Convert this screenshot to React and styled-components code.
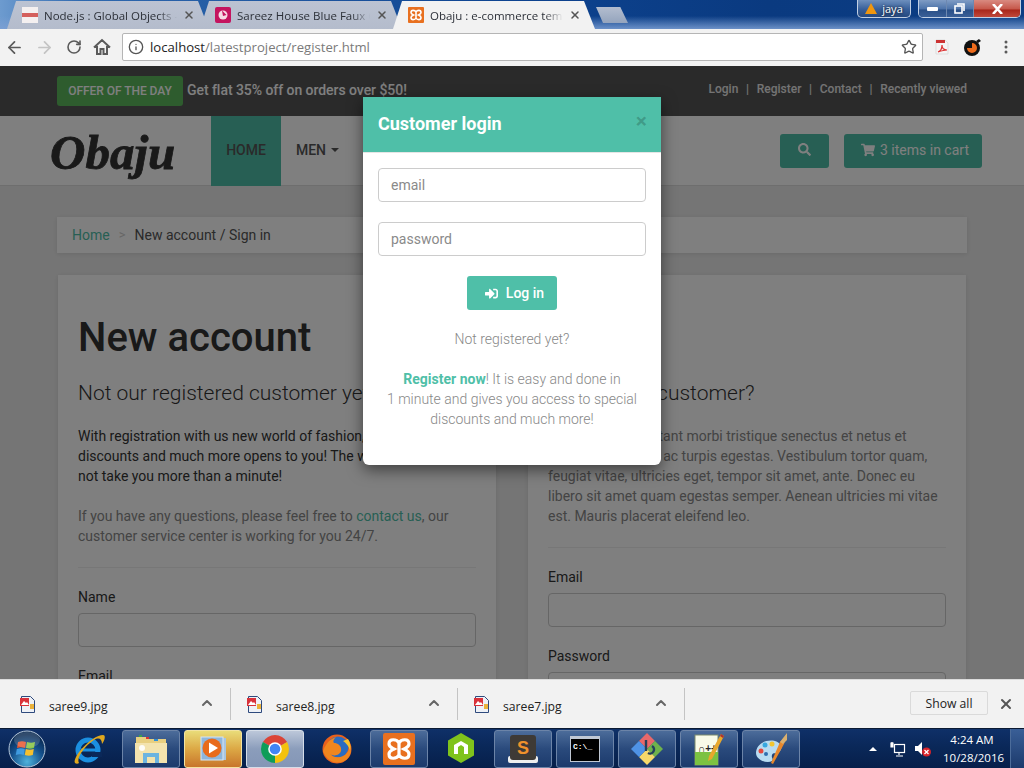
import React from 'react';
import styled, { createGlobalStyle } from 'styled-components';
import { ArrowLeft, ArrowRight, RotateCw, Info, Star, X, ChevronUp } from 'lucide-react';
import { FaSearch, FaShoppingCart, FaSignInAlt } from 'react-icons/fa';

const GlobalStyle = createGlobalStyle`
  html, body {
    margin: 0;
    padding: 0;
    width: 1024px;
    height: 768px;
    overflow: hidden;
    font-family: Roboto, "Liberation Sans", sans-serif;
  }
  * { box-sizing: border-box; }
`;

const Screen = styled.div`
  width: 1024px;
  height: 768px;
  display: flex;
  flex-direction: column;
  overflow: hidden;
`;

/* ---------- window title bar and tabs ---------- */

const TitleBar = styled.div`
  height: 29px;
  flex: none;
  display: flex;
  align-items: flex-start;
  padding-left: 7px;
  background:
    linear-gradient(180deg, rgba(10, 50, 120, 0) 55%, rgba(125, 160, 212, 0.85) 100%),
    linear-gradient(90deg, #6d9bcf 0%, #2e68ae 8%, #0d4390 50%, #0a3a80 75%, #0b3d84 100%);
`;

const Tab = styled.div`
  width: 202px;
  height: 28px;
  margin-top: 1px;
  margin-right: -9px;
  flex: none;
  padding: 0 14px 0 15px;
  display: flex;
  align-items: center;
  gap: 6px;
  font-family: "Open Sans", sans-serif;
  font-size: 11.5px;
  color: #2c3038;
  clip-path: polygon(0 100%, 9px 0, calc(100% - 11px) 0, 100% 100%);
  background: ${(p) => (p.$active ? '#f2f2f2' : 'linear-gradient(180deg, #bcc3d2, #b4bccc)')};
  position: relative;
  z-index: ${(p) => (p.$active ? 2 : 1)};
`;

const TabTitle = styled.span`
  flex: 1;
  overflow: hidden;
  white-space: nowrap;
  -webkit-mask-image: linear-gradient(90deg, #000 86%, transparent 100%);
  mask-image: linear-gradient(90deg, #000 86%, transparent 100%);
`;

const TabClose = styled(X)`
  flex: none;
  width: 12px;
  height: 12px;
  color: #555;
  stroke-width: 3;
`;

const NewTab = styled.div`
  width: 32px;
  height: 16px;
  margin: 7px 0 0 10px;
  flex: none;
  background: linear-gradient(180deg, #b3bdcf, #94a4bd);
  clip-path: polygon(0 0, 76% 0, 100% 100%, 22% 100%);
`;

const WindowControls = styled.div`
  margin-left: auto;
  display: flex;
  align-items: flex-start;
  gap: 7px;
  padding-right: 3px;
`;

const UserBadge = styled.div`
  width: 54px;
  height: 18px;
  border: 1px solid #c2d0e4;
  border-top: none;
  border-radius: 0 0 5px 5px;
  background: linear-gradient(180deg, #6d8fbd 0%, #375f9a 55%, #26497f 100%);
  display: flex;
  align-items: center;
  justify-content: center;
  gap: 5px;
  color: #fff;
  font-family: "Open Sans", sans-serif;
  font-size: 11px;
  text-shadow: 0 0 3px #000;
`;

const ControlGroup = styled.div`
  width: 103px;
  height: 18px;
  border: 1px solid #c2d0e4;
  border-top: none;
  border-radius: 0 0 5px 5px;
  display: flex;
  overflow: hidden;
`;

const ControlButton = styled.div`
  flex: ${(p) => (p.$close ? '0 0 47px' : '1')};
  display: flex;
  align-items: center;
  justify-content: center;
  border-left: ${(p) => (p.$first ? 'none' : '1px solid #6d88b0')};
  background: ${(p) =>
    p.$close
      ? 'linear-gradient(180deg, #d98a80 0%, #c75a4d 50%, #a9281c 60%, #c0483b 100%)'
      : 'linear-gradient(180deg, #7f9cc4 0%, #4f75ab 50%, #2a5088 60%, #3a5f97 100%)'};
`;

/* ---------- browser toolbar ---------- */

const Toolbar = styled.div`
  height: 37px;
  flex: none;
  display: flex;
  align-items: center;
  background: #f2f2f2;
  padding-bottom: 1px;
`;

const NavButton = styled.div`
  width: ${(p) => p.$w || 28}px;
  margin-right: ${(p) => p.$gap ?? 2}px;
  flex: none;
  display: flex;
  justify-content: center;
  align-items: center;
  color: ${(p) => (p.$off ? '#c4c4c4' : '#5a5a5a')};
`;

const AddressBar = styled.div`
  width: 801px;
  height: 28px;
  margin-left: 8px;
  flex: none;
  background: #fff;
  border: 1px solid #b5b5b5;
  border-radius: 2px;
  display: flex;
  align-items: center;
  padding: 0 5px 0 5px;
  font-family: "Open Sans", sans-serif;
  font-size: 13.15px;
  color: #7a7a7a;
  b {
    font-weight: 400;
    color: #222;
  }
`;

const UrlText = styled.span`
  margin-left: 6px;
  flex: 1;
`;

/* ---------- page behind the dialog ---------- */

const Viewport = styled.div`
  height: 613px;
  flex: none;
  position: relative;
  overflow: hidden;
  background: #ebebeb;
  font-size: 14px;
  color: #555;
`;

const TopBar = styled.div`
  height: 50px;
  background: #555;
  padding: 0 57px;
  display: flex;
  align-items: center;
  justify-content: space-between;
  color: #fff;
`;

const Offer = styled.div`
  display: flex;
  align-items: center;
  gap: 4px;
  font-weight: 500;
  margin-top: -1px;
  letter-spacing: -0.05px;
`;

const OfferBadge = styled.span`
  width: 126px;
  height: 30px;
  background: #5cb85c;
  border-radius: 3px;
  display: flex;
  align-items: center;
  justify-content: center;
  font-size: 12px;
  font-weight: 500;
`;

const OfferText = styled.span`
  margin-top: -2px;
`;

const TopLinks = styled.div`
  display: flex;
  gap: 7.7px;
  font-size: 12px;
  font-weight: 500;
  color: #e8e8e8;
  margin-top: -5px;
`;

const Navbar = styled.div`
  height: 70px;
  background: #fff;
  border-bottom: 1px solid #ddd;
  display: flex;
  align-items: stretch;
  padding: 0 42px 0 50px;
`;

const Logo = styled.div`
  width: 161px;
  flex: none;
  font-family: "Liberation Serif", serif;
  font-style: italic;
  font-weight: 700;
  font-size: 49px;
  line-height: 74px;
  color: #333;
  -webkit-text-stroke: 0.8px #333;
`;

const NavItem = styled.div`
  width: ${(p) => p.$w}px;
  display: flex;
  align-items: center;
  justify-content: center;
  gap: 5px;
  padding-bottom: 2px;
  font-weight: 500;
  color: #555;
  margin-bottom: ${(p) => (p.$active ? '-1px' : '0')};
  background: ${(p) => (p.$active ? '#4fbfa8' : 'transparent')};
`;

const Caret = styled.span`
  width: 0;
  height: 0;
  border-left: 4px solid transparent;
  border-right: 4px solid transparent;
  border-top: 4px solid #555;
`;

const TealButton = styled.div`
  height: 34px;
  width: ${(p) => p.$w}px;
  padding-left: ${(p) => p.$pad || 0}px;
  background: #4fbfa8;
  border-radius: 3px;
  display: flex;
  align-items: center;
  justify-content: center;
  gap: ${(p) => p.$gap || 5}px;
  color: #fff;
  font-weight: ${(p) => p.$weight || 400};
`;

const NavActions = styled.div`
  margin-left: auto;
  display: flex;
  align-items: center;
  gap: 15px;
  color: #fff;
  ${TealButton} {
    padding-bottom: 2px;
  }
`;

const Content = styled.div`
  padding: 31px 57px 0;
`;

const Breadcrumb = styled.div`
  height: 36px;
  background: #fff;
  box-shadow: 0 1px 5px rgba(0, 0, 0, 0.1);
  padding: 0 15px 1px;
  display: flex;
  align-items: center;
  gap: 9px;
`;

const Teal = styled.span`
  color: #4fbfa8;
`;

const Sep = styled.span`
  color: #ccc;
  font-size: 13px;
`;

const Columns = styled.div`
  margin: 22px 1px 0;
  display: grid;
  grid-template-columns: 438px 438px;
  gap: 32px;
`;

const Box = styled.div`
  background: #fff;
  box-shadow: 0 1px 5px rgba(0, 0, 0, 0.1);
  padding: 43px 20px 0;
  height: 500px;
`;

const Title = styled.h1`
  margin: 0;
  font-size: 40px;
  line-height: 40px;
  font-weight: 500;
  color: #333;
`;

const Subtitle = styled.h2`
  margin: 23px 0 21px;
  font-size: 21px;
  line-height: 24px;
  font-weight: 300;
  color: #333;
  white-space: nowrap;
`;

const Para = styled.p`
  margin: 0 0 20px;
  line-height: 20px;
  color: ${(p) => (p.$muted ? '#888' : '#333')};
  white-space: nowrap;
`;

const Rule = styled.hr`
  margin: 21px 0 19px;
  border: none;
  border-top: 1px solid #eee;
`;

const Label = styled.div`
  line-height: 20px;
  margin-bottom: 6px;
  color: #333;
`;

const PageInput = styled.div`
  height: 34px;
  border: 1px solid #ccc;
  border-radius: 4px;
  margin-bottom: 19px;
`;

/* ---------- login dialog ---------- */

const Backdrop = styled.div`
  position: absolute;
  inset: 0;
  background: rgba(0, 0, 0, 0.5);
  display: flex;
  justify-content: center;
  align-items: flex-start;
  padding-top: 31px;
`;

const Modal = styled.div`
  width: 298px;
  height: 368px;
  background: #fff;
  border-radius: 0 0 6px 6px;
  box-shadow: 0 5px 15px rgba(0, 0, 0, 0.5);
  overflow: hidden;
`;

const ModalHeader = styled.div`
  height: 56px;
  background: #4fbfa8;
  padding: 0 15px 2px;
  display: flex;
  align-items: center;
  justify-content: space-between;
  color: #fff;
  font-size: 18px;
  font-weight: 700;
  border-bottom: 1px solid #e5e5e5;
`;

const ModalClose = styled.span`
  font-size: 21px;
  font-weight: 700;
  color: rgba(0, 0, 0, 0.2);
  line-height: 1;
  margin: -4px -1px 0 0;
`;

const ModalBody = styled.div`
  padding: 15px 15px 0;
  display: flex;
  flex-direction: column;
  align-items: stretch;
`;

const Field = styled.div`
  height: 34px;
  border: 1px solid #ccc;
  border-radius: 4px;
  padding: 0 12px;
  margin-bottom: 20px;
  display: flex;
  align-items: center;
  color: #8a8a8a;
  font-size: 14px;
  font-weight: 400;
`;

const ModalAction = styled.div`
  display: flex;
  justify-content: center;
`;

const ModalNote = styled.div`
  text-align: center;
  line-height: 20px;
  color: #888;
  font-weight: 300;
  margin-top: ${(p) => p.$top}px;
  b {
    font-weight: 700;
    color: #4fbfa8;
  }
`;

/* ---------- downloads shelf ---------- */

const Downloads = styled.div`
  height: 49px;
  flex: none;
  background: #f2f2f2;
  border-top: 1px solid #dcdcdc;
  display: flex;
  align-items: center;
  font-family: "Open Sans", sans-serif;
  font-size: 12.2px;
  color: #222;
`;

const DownloadItem = styled.div`
  width: ${(p) => (p.$first ? 231 : 227)}px;
  height: 32px;
  flex: none;
  padding: 0 15px 0 ${(p) => (p.$first ? 20 : 16)}px;
  border-right: 1px solid #c4c4c4;
  display: flex;
  align-items: center;
  gap: 12px;
`;

const FileName = styled.span`
  flex: 1;
  margin-top: 4px;
`;

const ShowAll = styled.div`
  margin-left: auto;
  width: 78px;
  height: 24px;
  border: 1px solid #dadada;
  border-radius: 2px;
  display: flex;
  align-items: center;
  justify-content: center;
  margin-top: -2px;
`;

const ShelfClose = styled(X)`
  width: 16px;
  height: 16px;
  margin: 0 10px 0 10px;
  color: #555;
  stroke-width: 3;
`;

const ShelfChevron = styled(ChevronUp)`
  width: 16px;
  height: 16px;
  color: #666;
  stroke-width: 3;
  margin-top: -2px;
`;

/* ---------- windows taskbar ---------- */

const Taskbar = styled.div`
  height: 40px;
  flex: none;
  display: flex;
  align-items: center;
  border-top: 1px solid #0b1a33;
  background: linear-gradient(180deg, #0f3068 0%, #0a2859 45%, #071f4a 100%);
`;

const StartSlot = styled.div`
  width: 60px;
  flex: none;
  padding-left: 8px;
  display: flex;
  align-items: center;
`;

const TaskSlots = styled.div`
  display: flex;
  gap: 4px;
  align-items: center;
`;

const TaskButton = styled.div`
  width: 58px;
  height: 38px;
  flex: none;
  display: flex;
  align-items: center;
  justify-content: center;
  border-radius: 3px;
  ${(p) => p.$kind === 'box' && `
    border: 1px solid #6c84a8;
    background: linear-gradient(180deg, #4c6c9a 0%, #2a4a7c 50%, #1c3a6c 100%);
  `}
  ${(p) => p.$kind === 'active' && `
    border: 1px solid #d5dde8;
    background: linear-gradient(180deg, #bcc7d9 0%, #8b9dbb 50%, #8496b6 100%);
  `}
  ${(p) => p.$kind === 'hot' && `
    border: 1px solid #f3e3a0;
    background: linear-gradient(180deg, #e9dc79 0%, #dca845 50%, #c8752b 100%);
  `}
`;

const Tray = styled.div`
  margin-left: auto;
  display: flex;
  align-items: center;
  height: 100%;
  color: #fff;
`;

const TrayCaret = styled.span`
  width: 0;
  height: 0;
  border-left: 4px solid transparent;
  border-right: 4px solid transparent;
  border-bottom: 4px solid #fff;
  margin-right: 13px;
`;

const TrayIcon = styled.span`
  display: flex;
  margin-right: ${(p) => p.$gap}px;
`;

const Clock = styled.div`
  width: 58px;
  padding-top: 1px;
  text-align: center;
  font-family: "Open Sans", sans-serif;
  font-size: 11.5px;
  line-height: 18px;
  white-space: nowrap;
`;

const ShowDesktop = styled.div`
  width: 14px;
  height: 100%;
  margin-left: 9px;
  border-left: 1px solid #4c6c9a;
  background: linear-gradient(180deg, #3a5f97, #1c3a6c);
`;

/* ---------- drawn icons ---------- */

const HomeIcon = () => (
  <svg width="18" height="18" viewBox="0 0 18 18" fill="none" stroke="#5a5a5a" strokeWidth="2">
    <path d="M1 9.5 9 2l8 7.5M4 8v8h3.5v-5h3v5H14V8" />
  </svg>
);

const XamppIcon = ({ size = 16 }) => (
  <svg width={size} height={size} viewBox="0 0 32 32">
    <rect width="32" height="32" rx="2" fill="#e8701f" />
    <path
      d="M16 10C14 6 6 5 6 11C6 14 9 15 11 16C9 17 6 18 6 21C6 27 14 26 16 22C18 26 26 27 26 21C26 18 23 17 21 16C23 15 26 14 26 11C26 5 18 6 16 10ZM16 10V22"
      fill="none"
      stroke="#fff"
      strokeWidth="3.2"
    />
  </svg>
);

const NodeFavicon = () => (
  <svg width="16" height="16" viewBox="0 0 16 16">
    <rect width="16" height="16" fill="#f4f0f0" />
    <rect y="6" width="16" height="4" fill="#c9302c" opacity="0.75" />
  </svg>
);

const SareeFavicon = () => (
  <svg width="16" height="16" viewBox="0 0 16 16">
    <rect width="16" height="16" rx="2" fill="#c4145f" />
    <circle cx="8" cy="8" r="4.500" fill="#f6dbe6" />
    <path d="M7 3.500l4.500 4.500-3.500 1z" fill="#c4145f" />
  </svg>
);

const WarnIcon = () => (
  <svg width="12" height="11" viewBox="0 0 12 11">
    <path d="M6 0l6 11H0z" fill="#f0960e" />
  </svg>
);

const PdfIcon = () => (
  <svg width="14" height="16" viewBox="0 0 14 16">
    <path d="M1 1h9l3 3v11H1z" fill="#f4f4f4" stroke="#ddd" />
    <rect x="1" y="1" width="9" height="3" fill="#c33" />
    <path d="M3 13c3-1 4-4 4-7 0 3 2 5 5 5-3 0-6 1-9 2z" fill="none" stroke="#d33" strokeWidth="1.200" />
  </svg>
);

const BombIcon = () => (
  <svg width="18" height="18" viewBox="0 0 18 18">
    <circle cx="8" cy="10" r="8" fill="#111" />
    <path d="M8 10V5a5 5 0 1 1-5 5z" fill="#ee6b1c" />
    <path d="M12 3l3-2 2 2-3 2z" fill="#111" />
  </svg>
);

const MenuDots = () => (
  <svg width="4" height="14" viewBox="0 0 4 14" fill="#5a5a5a">
    <circle cx="2" cy="2" r="1.500" />
    <circle cx="2" cy="7" r="1.500" />
    <circle cx="2" cy="12" r="1.500" />
  </svg>
);

const ImageFileIcon = () => (
  <svg width="17" height="17" viewBox="0 0 17 17">
    <path d="M1.500 .5h9l4 4v12h-13z" fill="#eef1f6" stroke="#2e4a7d" />
    <rect x="0" y="2" width="9" height="8" fill="#d9323a" />
    <path d="M1 9l3-4 2 2 1-1 2 3z" fill="#fff" />
    <rect x="10" y="8" width="4" height="5" fill="#eab23c" />
  </svg>
);

const WinOrb = () => (
  <svg width="38" height="38" viewBox="0 0 38 38">
    <defs>
      <radialGradient id="orb" cx="50%" cy="85%" r="75%">
        <stop offset="0" stopColor="#4fb2dc" />
        <stop offset="0.6" stopColor="#14508c" />
        <stop offset="1" stopColor="#0a2a52" />
      </radialGradient>
    </defs>
    <circle cx="19" cy="19" r="18" fill="url(#orb)" stroke="#b7c8da" strokeWidth="1" />
    <path d="M10 12c3-1 5-1 8 0l-1 6c-3-1-5-1-8 0z" fill="#e8552d" />
    <path d="M19 12c3 1 5 1 8 0l-1 6c-3 1-5 1-8 0z" fill="#84c33f" />
    <path d="M8.800 19c3-1 5-1 8 0l-1 6c-3-1-5-1-8 0z" fill="#3f9be0" />
    <path d="M17.800 19c3 1 5 1 8 0l-1 6c-3 1-5 1-8 0z" fill="#f5c02e" />
    <ellipse cx="19" cy="10" rx="13" ry="8" fill="#fff" opacity="0.16" />
  </svg>
);

const IeIcon = () => (
  <svg width="34" height="34" viewBox="0 0 34 34">
    <circle cx="16" cy="18" r="10" fill="none" stroke="#1b8fe0" strokeWidth="5" />
    <rect x="9" y="16.500" width="15" height="3" fill="#1b8fe0" />
    <rect x="20" y="20" width="10" height="5" fill="#0a2859" />
    <path d="M3 31C0 25 20 3 31 3c3 0 2 5-1 9C30 7 27 5 22 8 14 13 4 25 7 31c-1 1-3 1-4 0z" fill="#e0a81e" />
  </svg>
);

const FolderIcon = () => (
  <svg width="34" height="30" viewBox="0 0 34 30">
    <path d="M2 3h10l2 2h18v6H2z" fill="#e8cf80" />
    <rect x="5" y="1" width="3" height="2" fill="#3aa04c" />
    <rect x="12" y="3" width="3" height="2" fill="#d33" />
    <rect x="20" y="5" width="4" height="2" fill="#2e8fd8" />
    <path d="M1 9h32v20H1z" fill="#f3e3ae" />
    <path d="M9 29V19h16v10h-4v-6h-8v6z" fill="#6cb4e0" />
    <circle cx="8" cy="14" r="3" fill="#fff" opacity="0.9" />
  </svg>
);

const WmpIcon = () => (
  <svg width="30" height="28" viewBox="0 0 30 28">
    <rect x="6" y="3" width="22" height="22" fill="#a9c5e0" />
    <rect x="3" y="2" width="22" height="23" fill="#8fb6dc" stroke="#d6e6f5" />
    <circle cx="14" cy="13" r="9.500" fill="#e86b1c" />
    <path d="M11 7.500 20 13l-9 5.500z" fill="#fff" />
  </svg>
);

const ChromeIcon = () => (
  <svg width="30" height="30" viewBox="0 0 30 30">
    <path d="M15 15 2.900 8A14 14 0 0 1 27.100 8z" fill="#db4437" />
    <path d="M15 15 27.100 8A14 14 0 0 1 15 29z" fill="#f4c20d" />
    <path d="M15 15V29A14 14 0 0 1 2.900 8z" fill="#0f9d58" />
    <circle cx="15" cy="15" r="6.800" fill="#fff" />
    <circle cx="15" cy="15" r="5.300" fill="#4285f4" />
  </svg>
);

const FirefoxIcon = () => (
  <svg width="32" height="32" viewBox="0 0 32 32">
    <circle cx="16" cy="16" r="14.500" fill="#e8601c" />
    <circle cx="17" cy="14" r="10.500" fill="#2b6cc0" />
    <path d="M2 18C6 8 10 6 15 4c-3 3-3 5-2 6 4 0 8 3 7 8-1 4-7 6-11 3 3 4 12 5 17-1 3-4 3-9 1-13 4 6 4 13 0 18-6 7-20 7-25-7z" fill="#f0861e" />
    <path d="M27 6c2 3 3 7 2 11-2-5-4-7-7-9z" fill="#f8c32c" />
  </svg>
);

const NodeIcon = () => (
  <svg width="30" height="34" viewBox="0 0 30 34">
    <path d="M15 1 28 8.500v15L15 31 2 23.500v-15z" fill="#7fc31c" />
    <path d="M8 22V13l7-4 7 4v9h-4v-7l-3-2-3 2v7z" fill="#fff" />
  </svg>
);

const SublimeIcon = () => (
  <svg width="32" height="32" viewBox="0 0 32 32">
    <rect x="1" y="23" width="30" height="7" rx="2" fill="#eee" />
    <rect x="3" y="2" width="26" height="25" rx="3" fill="#3e3a36" />
    <text x="16" y="21" textAnchor="middle" fontFamily="Liberation Sans, sans-serif" fontSize="18" fontWeight="700" fill="#f0912c">S</text>
  </svg>
);

const CmdIcon = () => (
  <svg width="30" height="26" viewBox="0 0 30 26">
    <rect width="30" height="26" fill="#c0c8d4" />
    <rect x="1" y="3" width="28" height="22" fill="#000" />
    <text x="3" y="13" fontFamily="Liberation Mono, monospace" fontSize="8" fontWeight="700" fill="#fff">C:\_</text>
  </svg>
);

const GitIcon = () => (
  <svg width="34" height="34" viewBox="0 0 34 34">
    <path d="M17 1l8 8-8 8-8-8z" fill="#e8686a" />
    <path d="M25 9l8 8-8 8-8-8z" fill="#6fb24c" />
    <path d="M17 17l8 8-8 8-8-8z" fill="#f6d96a" />
    <path d="M9 9l8 8-8 8-8-8z" fill="#4f93e6" />
    <path d="M16 8v11M22 14a4 4 0 1 1-4 7" fill="none" stroke="#24405c" strokeWidth="2.400" />
  </svg>
);

const NotepadIcon = () => (
  <svg width="32" height="34" viewBox="0 0 32 34">
    <rect x="2" y="3" width="23" height="30" fill="#f8fbe8" stroke="#7c8c6c" />
    <path d="M2 20h23v13H2z" fill="#7cc242" />
    <text x="5" y="20" fontFamily="Liberation Sans, sans-serif" fontSize="10" fontWeight="700" fill="#222">∩++</text>
    <path d="M28 2 31 4 19 27l-4 2 1-5z" fill="#e8a82c" />
    <path d="M28 2l3 2-1 2-3-2z" fill="#a33" />
  </svg>
);

const PaintIcon = () => (
  <svg width="34" height="34" viewBox="0 0 34 34">
    <path d="M2 21C2 12 12 7 21 9c7 2 8 8 4 11-3 2-6 0-7 3s2 4 0 6c-5 3-16-1-16-8z" fill="#b9dcf2" />
    <circle cx="7" cy="19" r="2.500" fill="#e4483f" />
    <circle cx="11" cy="13" r="2.500" fill="#38a8e0" />
    <circle cx="18" cy="12" r="2.500" fill="#f2c530" />
    <circle cx="12" cy="22" r="2" fill="#2f6fb0" />
    <path d="M33 2 26 10l-9 21 2 1 11-20 3-9z" fill="#e8882c" />
    <path d="M33 1l-7 9 3 2 4-4z" fill="#d9b070" />
  </svg>
);

const NetworkIcon = () => (
  <svg width="16" height="16" viewBox="0 0 16 16" fill="none" stroke="#fff" strokeWidth="1.200">
    <rect x="4.500" y="3.500" width="10" height="8" />
    <path d="M9 12v2M6 15h7M2 1v5M1 2h2v4H1z" />
  </svg>
);

const SpeakerIcon = () => (
  <svg width="16" height="16" viewBox="0 0 16 16">
    <path d="M0 5h3l4-4v13l-4-4H0z" fill="#fff" />
    <circle cx="11.500" cy="11" r="4.500" fill="#d8232a" />
    <path d="M9.500 9l4 4m0-4-4 4" stroke="#fff" strokeWidth="1.300" />
  </svg>
);

const tabs = [
  { title: 'Node.js : Global Objects - Tutorials', icon: <NodeFavicon /> },
  { title: 'Sareez House Blue Faux Georgette', icon: <SareeFavicon /> },
  { title: 'Obaju : e-commerce template', icon: <XamppIcon />, active: true },
];

const taskItems = [
  { icon: <IeIcon /> },
  { icon: <FolderIcon />, kind: 'box' },
  { icon: <WmpIcon />, kind: 'hot' },
  { icon: <ChromeIcon />, kind: 'active' },
  { icon: <FirefoxIcon /> },
  { icon: <XamppIcon size={32} />, kind: 'box' },
  { icon: <NodeIcon /> },
  { icon: <SublimeIcon />, kind: 'box' },
  { icon: <CmdIcon />, kind: 'box' },
  { icon: <GitIcon />, kind: 'box' },
  { icon: <NotepadIcon />, kind: 'box' },
  { icon: <PaintIcon />, kind: 'box' },
];

const App = () => (
  <Screen>
    <GlobalStyle />
    <TitleBar>
      {tabs.map((tab) => (
        <Tab key={tab.title} $active={tab.active}>
          {tab.icon}
          <TabTitle>{tab.title}</TabTitle>
          <TabClose />
        </Tab>
      ))}
      <NewTab />
      <WindowControls>
        <UserBadge>
          <WarnIcon />
          jaya
        </UserBadge>
        <ControlGroup>
          <ControlButton $first>
            <svg width="11" height="4" viewBox="0 0 11 4"><rect width="11" height="4" rx="1" fill="#fff" /></svg>
          </ControlButton>
          <ControlButton>
            <svg width="11" height="11" viewBox="0 0 11 11" fill="none" stroke="#fff" strokeWidth="1.600">
              <rect x="1" y="3" width="7" height="7" />
              <path d="M3 1h7v7" />
            </svg>
          </ControlButton>
          <ControlButton $close>
            <svg width="11" height="10" viewBox="0 0 11 10" stroke="#fff" strokeWidth="2.600">
              <path d="M1 0l9 10M10 0 1 10" />
            </svg>
          </ControlButton>
        </ControlGroup>
      </WindowControls>
    </TitleBar>

    <Toolbar>
      <NavButton><ArrowLeft size={19} strokeWidth={2.2} /></NavButton>
      <NavButton $off><ArrowRight size={19} strokeWidth={2.2} /></NavButton>
      <NavButton><RotateCw size={16} strokeWidth={2.4} /></NavButton>
      <NavButton $w={24} $gap={0}><HomeIcon /></NavButton>
      <AddressBar>
        <Info size={16} color="#555" strokeWidth={2} />
        <UrlText><b>localhost</b>/latestproject/register.html</UrlText>
        <Star size={16} color="#555" strokeWidth={2} />
      </AddressBar>
      <NavButton $w={38} $gap={0}><PdfIcon /></NavButton>
      <NavButton $w={24} $gap={0}><BombIcon /></NavButton>
      <NavButton $w={42} $gap={0}><MenuDots /></NavButton>
    </Toolbar>

    <Viewport>
      <TopBar>
        <Offer>
          <OfferBadge>OFFER OF THE DAY</OfferBadge>
          <OfferText>Get flat 35% off on orders over $50!</OfferText>
        </Offer>
        <TopLinks>
          <span>Login</span><span>|</span>
          <span>Register</span><span>|</span>
          <span>Contact</span><span>|</span>
          <span>Recently viewed</span>
        </TopLinks>
      </TopBar>

      <Navbar>
        <Logo>Obaju</Logo>
        <NavItem $w={70} $active>HOME</NavItem>
        <NavItem $w={73}>MEN <Caret /></NavItem>
        <NavActions>
          <TealButton $w={49}><FaSearch size={13} /></TealButton>
          <TealButton $w={138} $pad={4}><FaShoppingCart size={14} /> 3 items in cart</TealButton>
        </NavActions>
      </Navbar>

      <Content>
        <Breadcrumb>
          <Teal>Home</Teal>
          <Sep>&gt;</Sep>
          <span>New account / Sign in</span>
        </Breadcrumb>

        <Columns>
          <Box>
            <Title>New account</Title>
            <Subtitle>Not our registered customer yet?</Subtitle>
            <Para>
              With registration with us new world of fashion, fantastic
              <br />discounts and much more opens to you! The whole process will
              <br />not take you more than a minute!
            </Para>
            <Para $muted>
              If you have any questions, please feel free to <Teal>contact us</Teal>, our
              <br />customer service center is working for you 24/7.
            </Para>
            <Rule />
            <Label>Name</Label>
            <PageInput />
            <Label>Email</Label>
            <PageInput />
          </Box>
          <Box>
            <Title>Login</Title>
            <Subtitle>Already our customer?</Subtitle>
            <Para $muted>
              Pellentesque habitant morbi tristique senectus et netus et
              <br />malesuada fames ac turpis egestas. Vestibulum tortor quam,
              <br />feugiat vitae, ultricies eget, tempor sit amet, ante. Donec eu
              <br />libero sit amet quam egestas semper. Aenean ultricies mi vitae
              <br />est. Mauris placerat eleifend leo.
            </Para>
            <Rule />
            <Label>Email</Label>
            <PageInput />
            <Label>Password</Label>
            <PageInput />
          </Box>
        </Columns>
      </Content>

      <Backdrop>
        <Modal>
          <ModalHeader>
            Customer login
            <ModalClose>×</ModalClose>
          </ModalHeader>
          <ModalBody>
            <Field>email</Field>
            <Field>password</Field>
            <ModalAction>
              <TealButton $w={90} $gap={8} $weight={500} $pad={5}><FaSignInAlt size={13} /> Log in</TealButton>
            </ModalAction>
            <ModalNote $top={19}>Not registered yet?</ModalNote>
            <ModalNote $top={20}>
              <b>Register now</b>! It is easy and done in
              <br />1 minute and gives you access to special
              <br />discounts and much more!
            </ModalNote>
          </ModalBody>
        </Modal>
      </Backdrop>
    </Viewport>

    <Downloads>
      {['saree9.jpg', 'saree8.jpg', 'saree7.jpg'].map((name, i) => (
        <DownloadItem key={name} $first={i === 0}>
          <ImageFileIcon />
          <FileName>{name}</FileName>
          <ShelfChevron />
        </DownloadItem>
      ))}
      <ShowAll>Show all</ShowAll>
      <ShelfClose />
    </Downloads>

    <Taskbar>
      <StartSlot><WinOrb /></StartSlot>
      <TaskSlots>
        {taskItems.map((item, i) => (
          <TaskButton key={i} $kind={item.kind}>{item.icon}</TaskButton>
        ))}
      </TaskSlots>
      <Tray>
        <TrayCaret />
        <TrayIcon $gap={9}><NetworkIcon /></TrayIcon>
        <TrayIcon $gap={12}><SpeakerIcon /></TrayIcon>
        <Clock>4:24 AM<br />10/28/2016</Clock>
        <ShowDesktop />
      </Tray>
    </Taskbar>
  </Screen>
);

export default App;
